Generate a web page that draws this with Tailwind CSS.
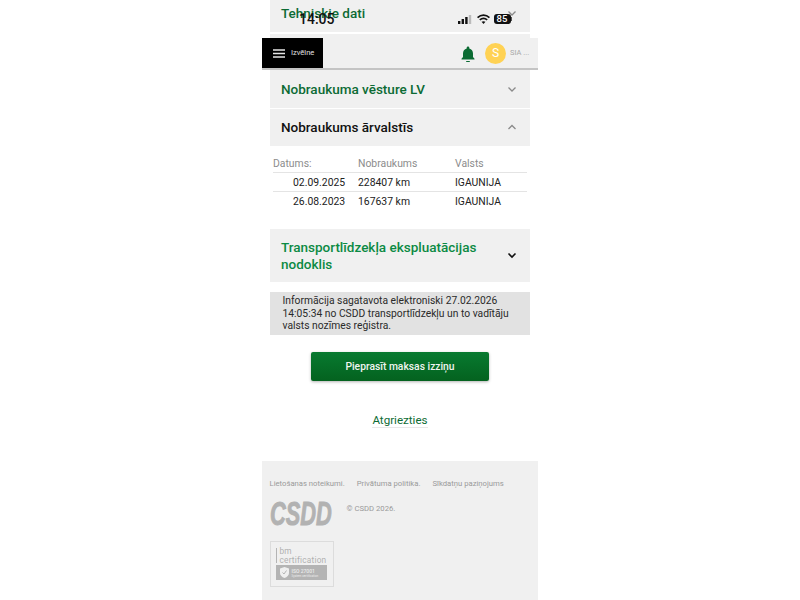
<!DOCTYPE html>
<html lang="lv">
<head>
<meta charset="utf-8">
<script src="https://cdn.jsdelivr.net/npm/@tailwindcss/browser@4"></script>
</head>
<body class="bg-white font-['Roboto',sans-serif]">
<div class="relative w-[276px] h-[600px] mx-auto overflow-hidden bg-white">
  <!-- status bar -->
  <div class="absolute left-0 top-0 w-full h-[36px] z-20 pointer-events-none">
    <span class="absolute left-[37px] top-[10px] text-[14px] leading-[18px] font-medium text-[#111]">14:05</span>
    <svg class="absolute left-[196px] top-[14px]" width="14" height="10" viewBox="0 0 14 10">
      <rect x="0" y="7" width="2.4" height="3" fill="#111"/><rect x="3.6" y="5" width="2.4" height="5" fill="#111"/><rect x="7.2" y="3" width="2.4" height="7" fill="#111"/><rect x="10.8" y="1" width="2.4" height="9" fill="#bbb"/>
    </svg>
    <svg class="absolute left-[215px] top-[13.5px]" width="13" height="10" viewBox="0 0 24 18">
      <path d="M1 6.5C7.500 .5 16.500 .5 23 6.500" fill="none" stroke="#111" stroke-width="3.200"/><path d="M5.200 10.800C9.500 7 14.500 7 18.800 10.800" fill="none" stroke="#111" stroke-width="3.200"/><path d="M12 18 8.400 14.300C10.500 12.700 13.500 12.700 15.600 14.300Z" fill="#111"/>
    </svg>
    <div class="absolute left-[231.500px] top-[13.500px] w-[17px] h-[10px] rounded-[3px] bg-[#111] flex items-center justify-center text-[9.500px] leading-none font-medium text-white">85</div>
    <div class="absolute left-[248.500px] top-[16.500px] w-[1px] h-[4px] bg-[#555]"></div>
  </div>

  <!-- first accordion -->
  <div class="mx-2 h-[32px] bg-[#f0f0f0] flex items-start justify-between pl-[11px] pr-[13px]">
    <span class="text-[13.500px] leading-[27px] font-medium text-[#0c6b34]">Tehniskie dati</span>
    <svg class="mt-[10px]" width="10" height="7" viewBox="0 0 10 7"><path d="M1.500 1.500 5 5 8.500 1.500" fill="none" stroke="#8a8a8a" stroke-width="1.300"/></svg>
  </div>
  <div class="mx-2 mt-[2px] h-[4px] bg-[#f0f0f0]"></div>

  <!-- header -->
  <header class="h-[32px] bg-[#f0f0f0] border-b-2 border-[#c4c4c4] flex items-stretch justify-between">
    <div class="w-[61px] bg-black flex items-center gap-[6px] pl-[11px]">
      <svg width="12" height="9" viewBox="0 0 12 9"><path d="M0 1h12M0 4.500h12M0 8h12" stroke="#e6e6e6" stroke-width="1.300"/></svg>
      <span class="text-[7.500px] leading-none text-[#e0e0e0]">Izvēlne</span>
    </div>
    <div class="flex items-center pr-[4px]">
      <svg class="mr-[10px] mt-[2px]" width="14" height="16" viewBox="0 0 14 16"><path d="M7 0.500c.8 0 1.300.6 1.300 1.300v.6C10.600 3 12 5 12 7.500v3.500l1.500 1.800v.7H.5v-.7L2 11V7.500C2 5 3.400 3 5.700 2.400v-.6C5.700 1.100 6.200.500 7 .500Z" fill="#0b6b33"/><path d="M5 15h4a2 1.300 0 0 1-4 0Z" fill="#0b6b33"/></svg>
      <div class="w-[21px] h-[21px] rounded-full bg-[#ffd254] flex items-center justify-center text-[12px] leading-none text-white">S</div>
      <span class="ml-[4px] w-[24px] text-[7.500px] leading-none text-[#a8a8a8] whitespace-nowrap">SIA ...</span>
    </div>
  </header>

  <main class="px-2">
    <div class="h-[38px] bg-[#f0f0f0] flex items-center justify-between pl-[11px] pr-[13px]">
      <span class="text-[13.500px] font-medium text-[#0c6b34]">Nobraukuma vēsture LV</span>
      <svg width="10" height="7" viewBox="0 0 10 7"><path d="M1.500 1.500 5 5 8.500 1.500" fill="none" stroke="#8a8a8a" stroke-width="1.300"/></svg>
    </div>
    <div class="mt-[1px] h-[37px] bg-[#f0f0f0] flex items-center justify-between pl-[11px] pr-[13px]">
      <span class="text-[13.500px] font-medium text-[#111]">Nobraukums ārvalstīs</span>
      <svg width="10" height="7" viewBox="0 0 10 7"><path d="M1.500 5 5 1.500 8.500 5" fill="none" stroke="#8a8a8a" stroke-width="1.300"/></svg>
    </div>

    <div class="mt-[9px] mx-[3px] text-[10.400px] leading-[19px]">
      <div class="grid grid-cols-[84px_97px_1fr] h-[18px] border-b border-[#e4e4e4] text-[#8c8c8c] leading-[17px]">
        <span>Datums:</span><span class="pl-[1px]">Nobraukums</span><span class="pl-[1px]">Valsts</span>
      </div>
      <div class="grid grid-cols-[84px_97px_1fr] h-[19px] border-b border-[#e4e4e4] text-[#222]">
        <span class="pl-[20px]">02.09.2025</span><span class="pl-[1px]">228407 km</span><span class="pl-[1px]">IGAUNIJA</span>
      </div>
      <div class="grid grid-cols-[84px_97px_1fr] h-[19px] text-[#222]">
        <span class="pl-[20px]">26.08.2023</span><span class="pl-[1px]">167637 km</span><span class="pl-[1px]">IGAUNIJA</span>
      </div>
    </div>

    <div class="mt-[18px] h-[53px] bg-[#f0f0f0] flex items-center justify-between pl-[11px] pr-[13px]">
      <span class="w-[215px] text-[13.500px] leading-[16.500px] font-medium text-[#0b8a43]">Transportlīdzekļa ekspluatācijas nodoklis</span>
      <svg width="10" height="7" viewBox="0 0 10 7"><path d="M1.500 1.500 5 5 8.500 1.500" fill="none" stroke="#111" stroke-width="1.600"/></svg>
    </div>

    <div class="mt-[10px] h-[43px] bg-[#e2e2e2] pl-[12.500px] pr-[10px] pt-[3px] text-[10.300px] leading-[12.500px] text-[#2a2a2a]">
      Informācija sagatavota elektroniski 27.02.2026 14:05:34 no CSDD transportlīdzekļu un to vadītāju valsts nozīmes reģistra.
    </div>

    <div class="mt-[17px] flex justify-center">
      <button class="w-[178px] h-[29px] rounded-[2px] bg-gradient-to-b from-[#087a30] to-[#04621f] text-[10.300px] font-medium text-[#f0f5f0] shadow-[0_1px_3px_rgba(0,0,0,0.3)]">Pieprasīt maksas izziņu</button>
    </div>

    <div class="mt-[31px] flex justify-center">
      <a class="h-[16px] text-[11.600px] leading-[16px] text-[#0c6b34] border-b border-[#e8e8e8]">Atgriezties</a>
    </div>
  </main>

  <footer class="absolute left-0 bottom-0 w-full h-[139px] bg-[#f0f0f0] px-[7.500px] pt-[17px]">
    <div class="flex gap-[12px] text-[7.700px] leading-[11px] text-[#9a9a9a] whitespace-nowrap">
      <span>Lietošanas noteikumi.</span><span>Privātuma politika.</span><span>Sīkdatņu paziņojums</span>
    </div>
    <div class="mt-[11px] flex items-start">
      <span class="block w-[63px] font-['Liberation_Sans',sans-serif] text-[33px] leading-[28px] font-bold italic text-[#b2b2b2] [-webkit-text-stroke:1px_#b2b2b2] scale-x-[0.66] origin-left whitespace-nowrap">CSDD</span>
      <span class="ml-[14px] mt-[3px] text-[7.700px] leading-[11px] text-[#9a9a9a]">© CSDD 2026.</span>
    </div>
    <div class="mt-[13px] w-[64px] h-[46px] border border-[#dcdcdc] relative">
      <div class="absolute left-[5px] top-[6px] w-[1px] h-[15px] bg-[#b4b4b4]"></div>
      <div class="absolute left-[9px] top-[5px] text-[8.300px] leading-[8.500px] text-[#b0b0b0] tracking-[0.200px] whitespace-nowrap">bm<br>certification</div>
      <div class="absolute left-[5px] top-[23px] w-[51px] h-[15px] bg-[#b4b4b4] flex items-center gap-[3px] pl-[4px]">
        <svg width="9" height="11" viewBox="0 0 9 11"><path d="M4.500 0 9 1.500V6c0 2.500-2 4-4.500 5C2 10 0 8.500 0 6V1.500Z" fill="#efefef"/><path d="M2.500 5.500 4 7 6.500 3.500" fill="none" stroke="#b4b4b4"/></svg>
        <div class="text-[#ececec]"><div class="text-[5px] leading-[6px] font-medium">ISO 27001</div><div class="text-[3px] leading-[4px] whitespace-nowrap">System certification</div></div>
      </div>
    </div>
  </footer>
</div>
</body>
</html>
